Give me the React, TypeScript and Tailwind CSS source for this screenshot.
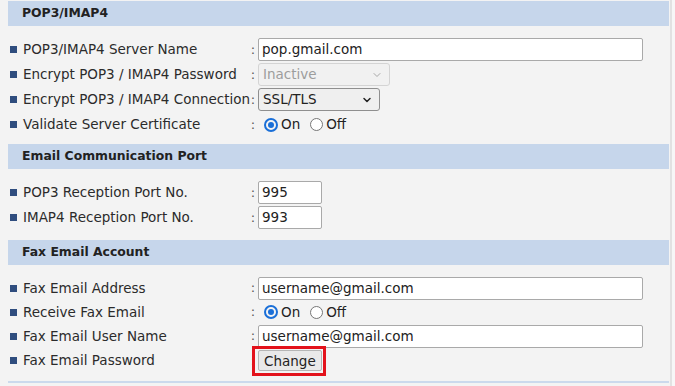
import { ChevronDown } from 'lucide-react'

const font = { fontFamily: '"DejaVu Sans", Verdana, sans-serif' }

function Header({ title }: { title: string }) {
  return (
    <div className="h-[25px] bg-[#c6d6eb] pl-[14px] flex items-center text-[12.4px] font-bold text-[#222]">
      {title}
    </div>
  )
}

function Row({ label, children, h = 'h-[25px]' }: { label: string; children: React.ReactNode; h?: string }) {
  return (
    <div className={`flex items-center ${h}`}>
      <div className="flex items-center w-[240px] text-[13.5px] text-[#2b2b2b]">
        <span className="w-[7px] h-[7px] bg-[#2f4d7e] mr-[6px] shrink-0" />
        <span className="whitespace-nowrap">{label}</span>
      </div>
      <span className="w-[6px] text-[13px] text-[#555] text-center">:</span>
      <div className="ml-[2px] flex items-center">{children}</div>
    </div>
  )
}

function TextBox({ value, w }: { value: string; w: string }) {
  return (
    <div className={`${w} h-[23px] bg-white border border-[#a9a9a9] rounded-[2px] px-[3px] flex items-center text-[13.5px] text-[#222]`}>
      {value}
    </div>
  )
}

function Select({ value, w, disabled }: { value: string; w: string; disabled?: boolean }) {
  return (
    <div
      className={`${w} h-[23px] rounded-[3px] border px-[4px] flex items-center justify-between text-[13.5px] ${
        disabled ? 'border-[#d4d4d4] bg-[#f1f1f1] text-[#9d9d9d]' : 'border-[#8f8f8f] bg-[#efefef] text-[#222]'
      }`}
    >
      <span>{value}</span>
      <ChevronDown size={12} strokeWidth={disabled ? 2 : 3} className={disabled ? 'text-[#a8a8a8] mr-[2px]' : 'text-[#222] mr-[2px]'} />
    </div>
  )
}

function Radio({ on }: { on: boolean }) {
  return (
    <div className="flex items-center text-[13.5px] text-[#222]">
      <span className="w-[14px] h-[14px] rounded-full border-2 border-[#1a6fd8] flex items-center justify-center ml-[6px]">
        {on && <span className="w-[6px] h-[6px] rounded-full bg-[#1a6fd8]" />}
      </span>
      <span className="ml-[3px]">On</span>
      <span className="w-[13px] h-[13px] rounded-full border border-[#767676] bg-white ml-[10px]" />
      <span className="ml-[3px]">Off</span>
    </div>
  )
}

export default function App() {
  return (
    <div className="w-[675px] h-[386px] bg-[#f3f3f3] flex overflow-hidden" style={font}>
      <div className="w-[669px] pl-[8px] pt-[1px] flex flex-col">
        <Header title="POP3/IMAP4" />
        <div className="pt-[11px] pb-[7px] -ml-[8px] pl-[10px]">
          <Row label="POP3/IMAP4 Server Name">
            <TextBox value="pop.gmail.com" w="w-[385px]" />
          </Row>
          <Row label="Encrypt POP3 / IMAP4 Password">
            <Select value="Inactive" w="w-[132px]" disabled />
          </Row>
          <Row label="Encrypt POP3 / IMAP4 Connection">
            <Select value="SSL/TLS" w="w-[122px]" />
          </Row>
          <Row label="Validate Server Certificate">
            <Radio on />
          </Row>
        </div>
        <Header title="Email Communication Port" />
        <div className="pt-[11px] pb-[10px] -ml-[8px] pl-[10px]">
          <Row label="POP3 Reception Port No.">
            <TextBox value="995" w="w-[64px]" />
          </Row>
          <Row label="IMAP4 Reception Port No.">
            <TextBox value="993" w="w-[64px]" />
          </Row>
        </div>
        <Header title="Fax Email Account" />
        <div className="pt-[11px] -ml-[8px] pl-[10px]">
          <Row label="Fax Email Address" h="h-[24px]">
            <TextBox value="username@gmail.com" w="w-[385px]" />
          </Row>
          <Row label="Receive Fax Email" h="h-[24px]">
            <Radio on />
          </Row>
          <Row label="Fax Email User Name" h="h-[24px]">
            <TextBox value="username@gmail.com" w="w-[385px]" />
          </Row>
          <Row label="Fax Email Password" h="h-[25px]">
            <div className="relative">
              <button className="h-[21px] px-[5px] bg-[#e9e9e9] border border-[#b5b5b5] rounded-[2px] text-[13.5px] text-[#222]">
                Change
              </button>
              <span className="absolute -left-[6px] -right-[4px] -top-[3px] -bottom-[3px] border-[3px] border-[#e3121b]" />
            </div>
          </Row>
        </div>
        <div className="mt-auto mb-[3px] h-[2px] bg-[#cbd9ec]" />
      </div>
      <div className="w-[2px] ml-[1px] bg-[#e2e2e2]" />
      <div className="flex-1 bg-[#f7f7f7]" />
    </div>
  )
}
